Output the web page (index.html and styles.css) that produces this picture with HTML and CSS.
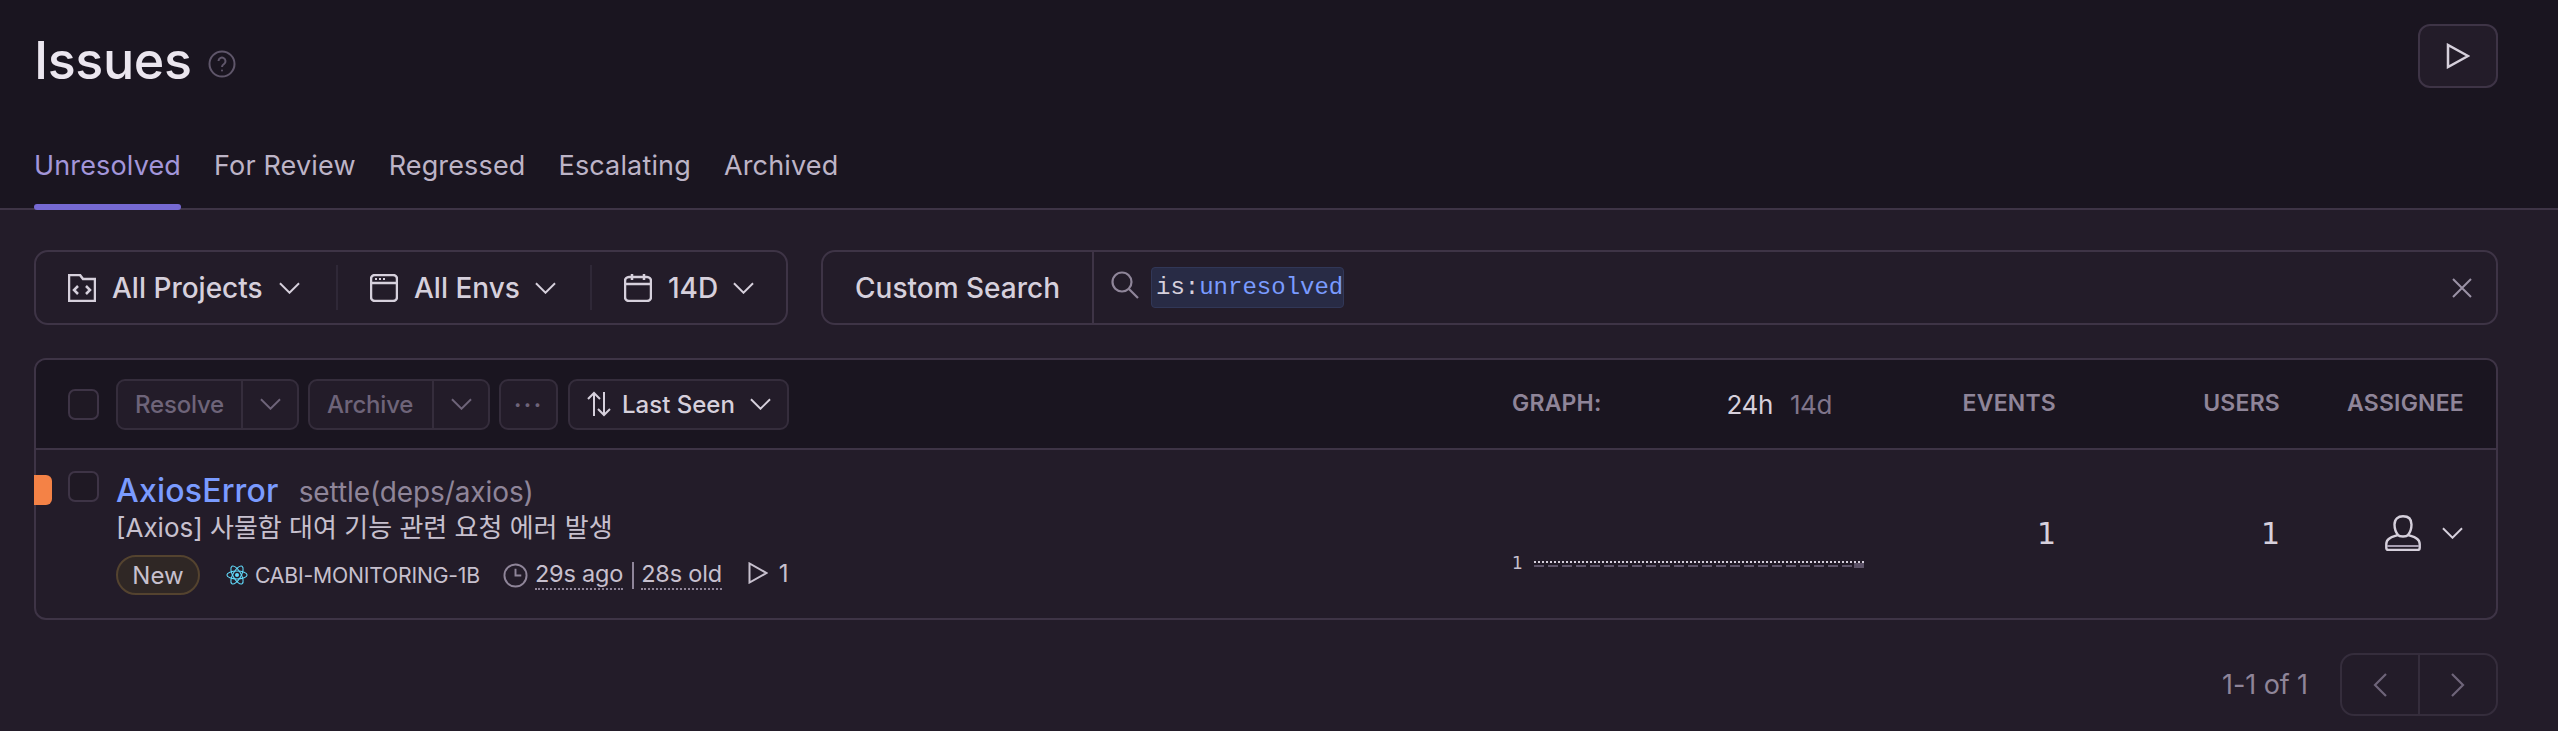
FILE: index.html
```html
<!DOCTYPE html>
<html lang="en">
<head>
<meta charset="utf-8">
<title>Issues</title>
<link rel="stylesheet" href="styles.css">
</head>
<body>
<header class="page-header">
  <div class="title-row">
    <h1 class="title">Issues</h1>
    <svg class="help" viewBox="0 0 28 28"><circle cx="14" cy="14" r="12.5"/><path d="M10.5 11a3.5 3.500 0 1 1 5.500 3c-1.300.9-2 1.500-2 3"/><circle class="dot" cx="14" cy="20.500" r="1"/></svg>
    <button class="play-btn"><svg viewBox="0 0 24 26"><path d="M2 2v22l20-11z"/></svg></button>
  </div>
  <nav class="tabs">
    <a class="tab active">Unresolved</a>
    <a class="tab">For Review</a>
    <a class="tab">Regressed</a>
    <a class="tab">Escalating</a>
    <a class="tab">Archived</a>
  </nav>
</header>
<main class="content">
  <div class="filters">
    <div class="page-filter">
      <div class="pf-item pf-projects">
        <svg class="pf-icon" viewBox="0 0 28 28"><path d="M1 1h11l3 4h12v22H1z"/><path d="M10 12l-4 4 4 4M18 12l4 4-4 4"/></svg>
        <span>All Projects</span>
        <svg class="chev" viewBox="0 0 22 12"><path d="M1 1l10 10L21 1"/></svg>
      </div>
      <div class="pf-item pf-envs">
        <svg class="pf-icon" viewBox="0 0 28 28"><rect x="1" y="1" width="26" height="26" rx="4"/><path d="M1 9h26"/><path class="dots" d="M5 5h2M9 5h2M13 5h2"/></svg>
        <span>All Envs</span>
        <svg class="chev" viewBox="0 0 22 12"><path d="M1 1l10 10L21 1"/></svg>
      </div>
      <div class="pf-item pf-date">
        <svg class="pf-icon" viewBox="0 0 28 28"><rect x="1" y="3" width="26" height="24" rx="4"/><path d="M1 10h26M8 0v6M20 0v6"/></svg>
        <span>14D</span>
        <svg class="chev" viewBox="0 0 22 12"><path d="M1 1l10 10L21 1"/></svg>
      </div>
    </div>
    <div class="search">
      <div class="saved">Custom Search</div>
      <svg class="search-icon" viewBox="0 0 28 28"><circle cx="11" cy="11" r="9.500"/><path d="M18 18l9 9"/></svg>
      <div class="token"><span class="key">is:</span><span class="val">unresolved</span></div>
      <svg class="clear" viewBox="0 0 20 20"><path d="M1 1l18 18M19 1L1 19"/></svg>
    </div>
  </div>

  <section class="panel">
    <div class="grid panel-head">
      <div class="actions">
        <span class="check"></span>
        <div class="btn-group disabled g-resolve"><span class="bg-label">Resolve</span><span class="bg-caret"><svg class="chev" viewBox="0 0 22 12"><path d="M1 1l10 10L21 1"/></svg></span></div>
        <div class="btn-group disabled g-archive"><span class="bg-label">Archive</span><span class="bg-caret"><svg class="chev" viewBox="0 0 22 12"><path d="M1 1l10 10L21 1"/></svg></span></div>
        <div class="btn-group disabled g-more"><span class="ellipsis">&#183;&#183;&#183;</span></div>
        <div class="btn-group g-sort">
          <svg class="sort-icon" viewBox="0 0 24 26"><path d="M7 25V2M1 8l6-6 6 6M17 1v23M11 18l6 6 6-6"/></svg>
          <span>Last Seen</span>
          <svg class="chev" viewBox="0 0 22 12"><path d="M1 1l10 10L21 1"/></svg>
        </div>
      </div>
      <div class="graph-head"><span>GRAPH:</span><span class="range"><b>24h</b><i>14d</i></span></div>
      <div class="col-head">EVENTS</div>
      <div class="col-head">USERS</div>
      <div class="col-head">ASSIGNEE</div>
    </div>
    <div class="grid issue">
      <div class="issue-main">
        <span class="level"></span>
        <span class="check"></span>
        <div class="issue-text">
          <div class="issue-title"><a class="err">AxiosError</a><span class="loc">settle(deps/axios)</span></div>
          <div class="issue-msg">[Axios] 사물함 대여 기능 관련 요청 에러 발생</div>
          <div class="issue-meta">
            <span class="pill">New</span>
            <svg class="react" viewBox="0 0 24 24"><circle cx="12" cy="12" r="2.200"/><g class="orbits"><ellipse cx="12" cy="12" rx="11" ry="4.400"/><ellipse cx="12" cy="12" rx="11" ry="4.400" transform="rotate(60 12 12)"/><ellipse cx="12" cy="12" rx="11" ry="4.400" transform="rotate(120 12 12)"/></g></svg>
            <span class="short-id">CABI-MONITORING-1B</span>
            <svg class="clock" viewBox="0 0 26 26"><circle cx="13" cy="13" r="11.500"/><path d="M13 6v7h6"/></svg>
            <span class="dotted">29s ago</span>
            <span class="sep"></span>
            <span class="dotted">28s old</span>
            <svg class="replay" viewBox="0 0 20 22"><path d="M1.500 1.500v19l17-9.500z"/></svg>
            <span class="replay-n">1</span>
          </div>
        </div>
      </div>
      <div class="spark">
        <span class="spark-n">1</span>
        <div class="spark-lines"><span class="line-dot"></span><span class="line-dash"></span></div>
      </div>
      <div class="num">1</div>
      <div class="num">1</div>
      <div class="assignee">
        <svg class="user" viewBox="0 0 36 36"><path d="M13 20c-2-2.500-3.500-6-3.500-10.500C9.500 4 13 1.300 18 1.300S26.500 4 26.500 9.500c0 4.500-1.500 8-3.500 10.500 3 1.500 11.700 2 11.700 9v4c0 1.300-.7 2-2 2H3.300c-1.300 0-2-.7-2-2v-4c0-7 8.700-7.500 11.700-9 1.500 2 8.500 2 10 0"/><path class="user-band" d="M2 31h32"/></svg>
        <svg class="chev" viewBox="0 0 22 12"><path d="M1 1l10 10L21 1"/></svg>
      </div>
    </div>
  </section>

  <div class="pager">
    <span class="count">1-1 of 1</span>
    <div class="pager-btns">
      <span class="pg"><svg viewBox="0 0 14 24"><path d="M13 1L2 12l11 11"/></svg></span>
      <span class="pg"><svg viewBox="0 0 14 24"><path d="M1 1l11 11L1 23"/></svg></span>
    </div>
  </div>
</main>
</body>
</html>
```
FILE: styles.css
```css
* { box-sizing: border-box; }
html, body { margin: 0; height: 100%; }
body {
  background: #231c29;
  color: #ebe6ef;
  font-family: "Inter", "Noto Sans CJK KR", sans-serif;
  overflow: hidden;
}
svg { fill: none; stroke: currentColor; stroke-width: 2.5; display: block; flex: none; }

.page-header {
  height: 210px;
  background: #1a1520;
  border-bottom: 2px solid #3e3446;
  padding: 24px 60px 0 34px;
  position: relative;
}
.title-row { display: flex; align-items: flex-start; height: 100px; }
.title { margin: 8px 0 0; font-size: 52px; line-height: 58px; font-weight: 500; color: #ebe6ef; letter-spacing: -0.4px; }
.help { width: 28px; height: 28px; margin: 26px 0 0 16px; color: #5f566a; stroke-width: 2; }
.help .dot { fill: currentColor; stroke: none; }
.play-btn {
  margin-left: auto;
  width: 80px;
  height: 64px;
  background: #231c29;
  border: 2px solid #3e3446;
  border-radius: 12px;
  padding: 0 0 0 0;
  display: flex;
  align-items: center;
  justify-content: center;
  color: #d6d0dc;
}
.play-btn svg { width: 24px; height: 26px; }

.tabs { display: flex; gap: 33px; height: 84px; }
.tab { height: 84px; padding-top: 24px; font-size: 27px; line-height: 36px; color: #bdb4c7; position: relative; letter-spacing: 0.15px; }
.tab.active { color: #a396da; }
.tab.active::after {
  content: "";
  position: absolute;
  left: 0; right: 0; bottom: -2px;
  height: 6px;
  border-radius: 3px;
  background: #7669d3;
}

.content { padding: 40px 60px 0 34px; }
.filters { display: flex; gap: 33px; height: 75px; }
.page-filter {
  width: 754px;
  display: flex;
  align-items: center;
  border: 2px solid #3e3446;
  border-radius: 14px;
  font-size: 28px;
  font-weight: 550;
  color: #d6d0dc;
}
.pf-item { display: flex; align-items: center; height: 45px; padding-left: 32px; border-right: 2px solid #2f2837; }
.pf-projects { width: 302px; }
.pf-envs { width: 254px; }
.pf-date { border-right: 0; }
.pf-icon { width: 28px; height: 28px; margin-right: 16px; stroke-width: 2.5; }
.pf-icon .dots { stroke-width: 2; }
.chev { width: 21px; height: 12px; margin-left: 15px; stroke-width: 2; }
.pf-projects .chev { margin-left: 16px; }
.search {
  flex: 1;
  display: flex;
  align-items: center;
  border: 2px solid #3e3446;
  border-radius: 14px;
  color: #d6d0dc;
}
.saved { width: 271px; height: 100%; display: flex; align-items: center; justify-content: center; border-right: 2px solid #3e3446; font-size: 28px; font-weight: 550; }
.search-icon { width: 28px; height: 28px; margin: -6px 0 0 17px; color: #8f8599; stroke-width: 2.2; }
.token {
  margin-left: 12px;
  width: 193px;
  height: 41px;
  padding-left: 4px;
  display: flex;
  align-items: center;
  background: #282b45;
  border: 1px solid #313757;
  border-radius: 4px;
  font-family: "Liberation Mono", monospace;
  font-size: 24px;
}
.key { color: #d6d0dc; }
.val { color: #7a9bff; }
.clear { width: 20px; height: 20px; margin-left: auto; margin-right: 24px; color: #9b92a6; stroke-width: 2; }

.panel { margin-top: 33px; height: 262px; border: 2px solid #3e3446; border-radius: 12px; }
.grid { display: grid; grid-template-columns: 1fr 352px 192px 224px 184px; padding-right: 32px; }
.panel-head { height: 90px; background: #1a1520; border-bottom: 2px solid #3e3446; border-radius: 10px 10px 0 0; align-items: center; }
.actions { display: flex; align-items: center; padding-left: 32px; }
.check { display: block; width: 31px; height: 31px; border: 2px solid #3e3446; border-radius: 7px; background: #1f1924; flex: none; }
.btn-group { display: flex; align-items: center; height: 51px; border: 2px solid #352d3c; border-radius: 9px; background: #231c29; font-size: 24px; font-weight: 500; color: #d6d0dc; }
.btn-group.disabled { color: #6e6479; }
.g-resolve { width: 183px; margin-left: 17px; }
.g-archive { width: 182px; margin-left: 9px; }
.g-more { width: 59px; margin-left: 9px; justify-content: center; }
.g-sort { width: 221px; margin-left: 10px; padding-left: 17px; }
.bg-label { padding-left: 17px; letter-spacing: -0.2px; }
.g-resolve .bg-label { width: 123px; }
.g-archive .bg-label { width: 122px; }
.bg-caret { flex: 1; height: 100%; display: flex; align-items: center; justify-content: center; border-left: 2px solid #352d3c; }
.bg-caret .chev { margin: 0; }
.ellipsis { font-size: 26px; letter-spacing: 2px; }
.sort-icon { width: 24px; height: 26px; margin-right: 11px; stroke-width: 2; }
.graph-head { display: flex; align-items: center; font-size: 23px; font-weight: 600; color: #8f8599; margin-top: -2px; letter-spacing: 0.2px; }
.range { display: flex; margin-left: 125px; margin-top: 2px; font-size: 26px; font-weight: 400; }
.range b { font-weight: 400; color: #d6d0dc; letter-spacing: -0.4px; }
.range i { font-style: normal; margin-left: 17px; color: #80758b; letter-spacing: -0.4px; }
.col-head { text-align: right; font-size: 23px; font-weight: 600; color: #8f8599; margin-top: -2px; letter-spacing: 0.2px; }

.issue { height: 170px; }
.issue-main { position: relative; display: flex; padding: 21px 0 0 32px; }
.level { position: absolute; left: -2px; top: 25px; width: 18px; height: 30px; background: #f48246; border-radius: 0 6px 6px 0; }
.issue-text { margin-left: 17px; padding-top: 2px; }
.issue-title { display: flex; align-items: baseline; height: 36px; }
.err { font-size: 32px; line-height: 36px; font-weight: 550; color: #7a9bff; letter-spacing: 0.2px; }
.loc { margin-left: 20px; font-size: 28px; color: #8f8599; letter-spacing: -0.1px; }
.issue-msg { margin-top: 1px; font-size: 26px; line-height: 36px; color: #c7c0ce; }
.issue-meta { display: flex; align-items: center; margin-top: 9px; height: 40px; color: #c7c0ce; font-size: 24px; }
.pill { width: 84px; height: 40px; display: flex; align-items: center; justify-content: center; border: 2px solid #54432f; border-radius: 20px; background: #2f2725; }
.react { width: 22px; height: 22px; margin-left: 26px; color: #61dafb; stroke-width: 1.2; }
.react circle { fill: currentColor; stroke: none; }
.short-id { margin-left: 7px; font-size: 21.200px; letter-spacing: -0.2px; }
.clock { width: 25px; height: 25px; margin-left: 23px; color: #8f8599; stroke-width: 2; }
.dotted { margin-left: 7px; font-size: 23.500px; line-height: 28px; border-bottom: 2px dotted #8f8599; letter-spacing: -0.2px; }
.sep { width: 2px; height: 27px; margin: 0 0 0 9px; background: #8f8599; }
.sep + .dotted { margin-left: 7px; }
.replay { width: 20px; height: 22px; margin: -4px 0 0 26px; stroke-width: 2; }
.replay-n { margin: -4px 0 0 11px; }

.spark { display: flex; align-items: flex-start; padding-top: 103px; }
.spark-n { font-family: "DejaVu Sans", sans-serif; font-size: 17px; line-height: 20px; color: #c7c0ce; }
.spark-lines { position: relative; margin: 8px 0 0 11px; width: 330px; }
.line-dot { display: block; height: 2px; background: repeating-linear-gradient(90deg, #d6d0dc 0 2px, transparent 2px 4px); }
.line-dash { display: block; height: 2px; margin-top: 2px; background: repeating-linear-gradient(90deg, #5c5267 0 10px, transparent 10px 14px); }
.line-dash::after { content: ""; position: absolute; right: 0; top: 2px; width: 10px; height: 5px; background: #5c5267; }
.num { font-family: "DejaVu Sans", sans-serif; text-align: right; font-size: 30px; line-height: 36px; color: #d6d0dc; padding-top: 66px; }
.assignee { display: flex; justify-content: flex-end; align-items: center; height: 36px; margin-top: 65px; color: #d6d0dc; }
.assignee .user { width: 36px; height: 36px; stroke-width: 2.4; }
.user-band { stroke: #a79eb1; stroke-width: 2; }
.assignee .chev { margin: 0 1px 0 21px; }

.pager { display: flex; justify-content: flex-end; align-items: center; margin-top: 33px; }
.count { font-size: 27px; color: #8f8599; margin-right: 32px; letter-spacing: -0.1px; }
.pager-btns { display: flex; width: 158px; height: 63px; border: 2px solid #352d3c; border-radius: 14px; }
.pg { flex: 1; display: flex; align-items: center; justify-content: center; color: #6e6479; }
.pg + .pg { border-left: 2px solid #352d3c; }
.pg svg { width: 14px; height: 24px; stroke-width: 2.2; }
```
